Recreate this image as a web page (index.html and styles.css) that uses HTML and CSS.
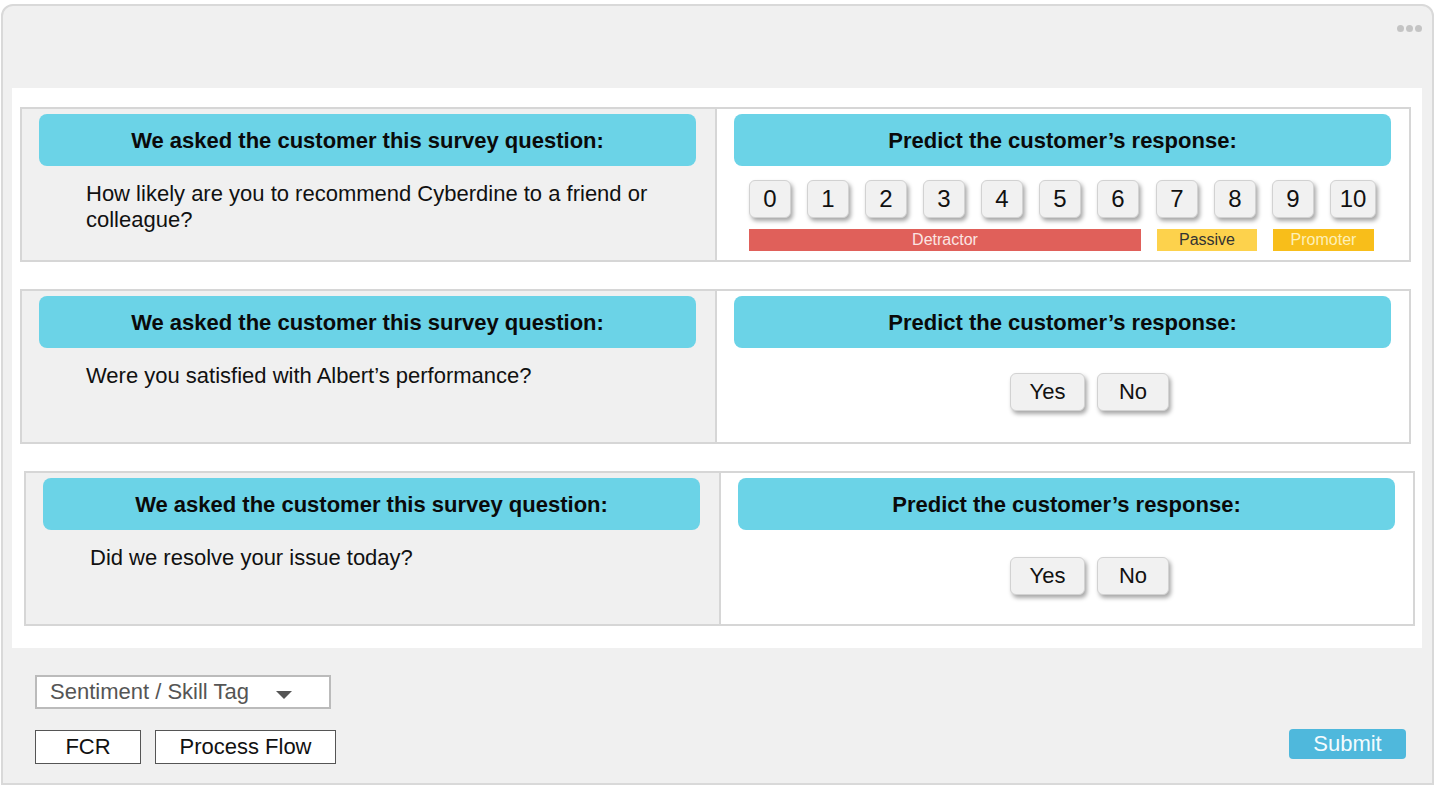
FILE: index.html
```html
<!DOCTYPE html>
<html>
<head>
<meta charset="utf-8">
<link rel="stylesheet" href="styles.css">
</head>
<body>
<div class="frame">
  <div class="dots"><span></span><span></span><span></span></div>
  <div class="panel">
    <div class="row">
      <div class="cell left">
        <div class="pill">We asked the customer this survey question:</div>
        <p class="question">How likely are you to recommend Cyberdine to a friend or colleague?</p>
      </div>
      <div class="cell right">
        <div class="pill">Predict the customer’s response:</div>
        <div class="scale">
          <div class="nums">
            <span class="num">0</span><span class="num">1</span><span class="num">2</span><span class="num">3</span><span class="num">4</span><span class="num">5</span><span class="num">6</span><span class="num">7</span><span class="num">8</span><span class="num">9</span><span class="num">10</span>
          </div>
          <div class="bands">
            <span class="band detractor">Detractor</span>
            <span class="band passive">Passive</span>
            <span class="band promoter">Promoter</span>
          </div>
        </div>
      </div>
    </div>
    <div class="row">
      <div class="cell left">
        <div class="pill">We asked the customer this survey question:</div>
        <p class="question">Were you satisfied with Albert’s performance?</p>
      </div>
      <div class="cell right">
        <div class="pill">Predict the customer’s response:</div>
        <div class="yesno"><span class="yn">Yes</span><span class="yn">No</span></div>
      </div>
    </div>
    <div class="row shifted">
      <div class="cell left">
        <div class="pill">We asked the customer this survey question:</div>
        <p class="question">Did we resolve your issue today?</p>
      </div>
      <div class="cell right">
        <div class="pill">Predict the customer’s response:</div>
        <div class="yesno low"><span class="yn">Yes</span><span class="yn">No</span></div>
      </div>
    </div>
  </div>
  <div class="footer">
    <div class="controls">
      <div class="dropdown"><span>Sentiment / Skill Tag</span><span class="caret"></span></div>
      <div class="links">
        <span class="box fcr">FCR</span>
        <span class="box pf">Process Flow</span>
      </div>
    </div>
    <span class="submit">Submit</span>
  </div>
</div>
</body>
</html>
```

FILE: styles.css
```css
* { box-sizing: border-box; }
html, body { margin: 0; padding: 0; background: #ffffff; }
body { font-family: "Liberation Sans", Arial, sans-serif; color: #111; width: 1436px; height: 786px; overflow: hidden; }

.frame {
  position: relative;
  margin: 4px 0 0 1px;
  width: 1433px;
  height: 781px;
  background: #f0f0f0;
  border: 2px solid #d9d9d9;
  border-radius: 12px 12px 0 0;
  padding-top: 82px;
}

.dots { position: absolute; top: 19px; right: 10px; display: flex; gap: 2px; }
.dots span { width: 7px; height: 7px; border-radius: 50%; background: #c4c4c4; }

.panel {
  margin-left: 9px;
  width: 1410px;
  height: 560px;
  background: #ffffff;
  padding: 19px 0 0 8px;
}

.row {
  display: grid;
  grid-template-columns: 695px 1fr;
  width: 1391px;
  height: 155px;
  border: 2px solid #d6d6d6;
  margin-bottom: 27px;
}
.row + .row { margin-top: 1px; }
.row.shifted { margin-left: 4px; margin-top: 2px; }

.cell { padding: 5px 19px 0 17px; }
.cell.left { background: #f0f0f0; border-right: 2px solid #d6d6d6; }
.cell.right { background: #ffffff; padding: 5px 18px 0 17px; }

.pill {
  height: 52px;
  padding-top: 2px;
  background: #6bd3e7;
  border-radius: 8px;
  display: flex;
  align-items: center;
  justify-content: center;
  font-weight: bold;
  font-size: 22px;
  color: #0a0a0a;
}

.question {
  margin: 15px 0 0 47px;
  font-size: 22px;
  line-height: 26px;
  color: #111;
  width: 590px;
}

.scale { padding: 14px 0 0 15px; }
.nums { display: flex; gap: 16px; }
.num {
  width: 42px;
  height: 38px;
  background: #f1f1f1;
  border: 1px solid #d2d2d2;
  border-radius: 6px;
  box-shadow: 2px 3px 4px rgba(0,0,0,0.35);
  display: flex;
  align-items: center;
  justify-content: center;
  font-size: 24px;
  color: #111;
}
.num:nth-child(8) { margin-left: 1px; }
.num:last-child { width: 46px; }

.bands { display: flex; margin-top: 11px; height: 22px; }
.band { display: flex; align-items: center; justify-content: center; font-size: 16px; height: 22px; }
.detractor { width: 392px; background: #e0605a; color: #fbe5e2; }
.passive { width: 100px; margin-left: 16px; background: #fdd24c; color: #333; }
.promoter { width: 101px; margin-left: 16px; background: #f8be1a; color: #fdf0b8; }

.yesno { display: flex; gap: 12px; padding: 25px 0 0 276px; }
.yesno.low { padding: 27px 0 0 272px; }
.yn {
  width: 75px;
  height: 38px;
  background: #f1f1f1;
  border: 1px solid #d2d2d2;
  border-radius: 6px;
  box-shadow: 2px 3px 4px rgba(0,0,0,0.35);
  display: flex;
  align-items: center;
  justify-content: center;
  font-size: 22px;
  color: #111;
}
.yn + .yn { width: 72px; }

.footer {
  display: flex;
  justify-content: space-between;
  align-items: flex-end;
  padding: 27px 26px 0 32px;
}
.controls { display: flex; flex-direction: column; gap: 21px; }
.dropdown {
  width: 296px;
  height: 34px;
  border: 2px solid #bbbbbb;
  background: #ffffff;
  display: flex;
  align-items: center;
  padding-left: 13px;
  font-size: 22px;
  color: #555;
}
.caret {
  margin-left: 27px;
  margin-top: 5px;
  width: 0; height: 0;
  border-left: 8px solid transparent;
  border-right: 8px solid transparent;
  border-top: 8px solid #555;
}
.links { display: flex; gap: 14px; }
.box {
  height: 34px;
  border: 1px solid #555;
  background: #ffffff;
  display: flex;
  align-items: center;
  justify-content: center;
  font-size: 22px;
  color: #111;
}
.fcr { width: 106px; }
.pf { width: 181px; }

.submit {
  width: 117px;
  height: 30px;
  margin-bottom: 5px;
  background: #4fb8dc;
  border-radius: 4px;
  color: #f4fbfe;
  font-size: 22px;
  display: flex;
  align-items: center;
  justify-content: center;
}
```
